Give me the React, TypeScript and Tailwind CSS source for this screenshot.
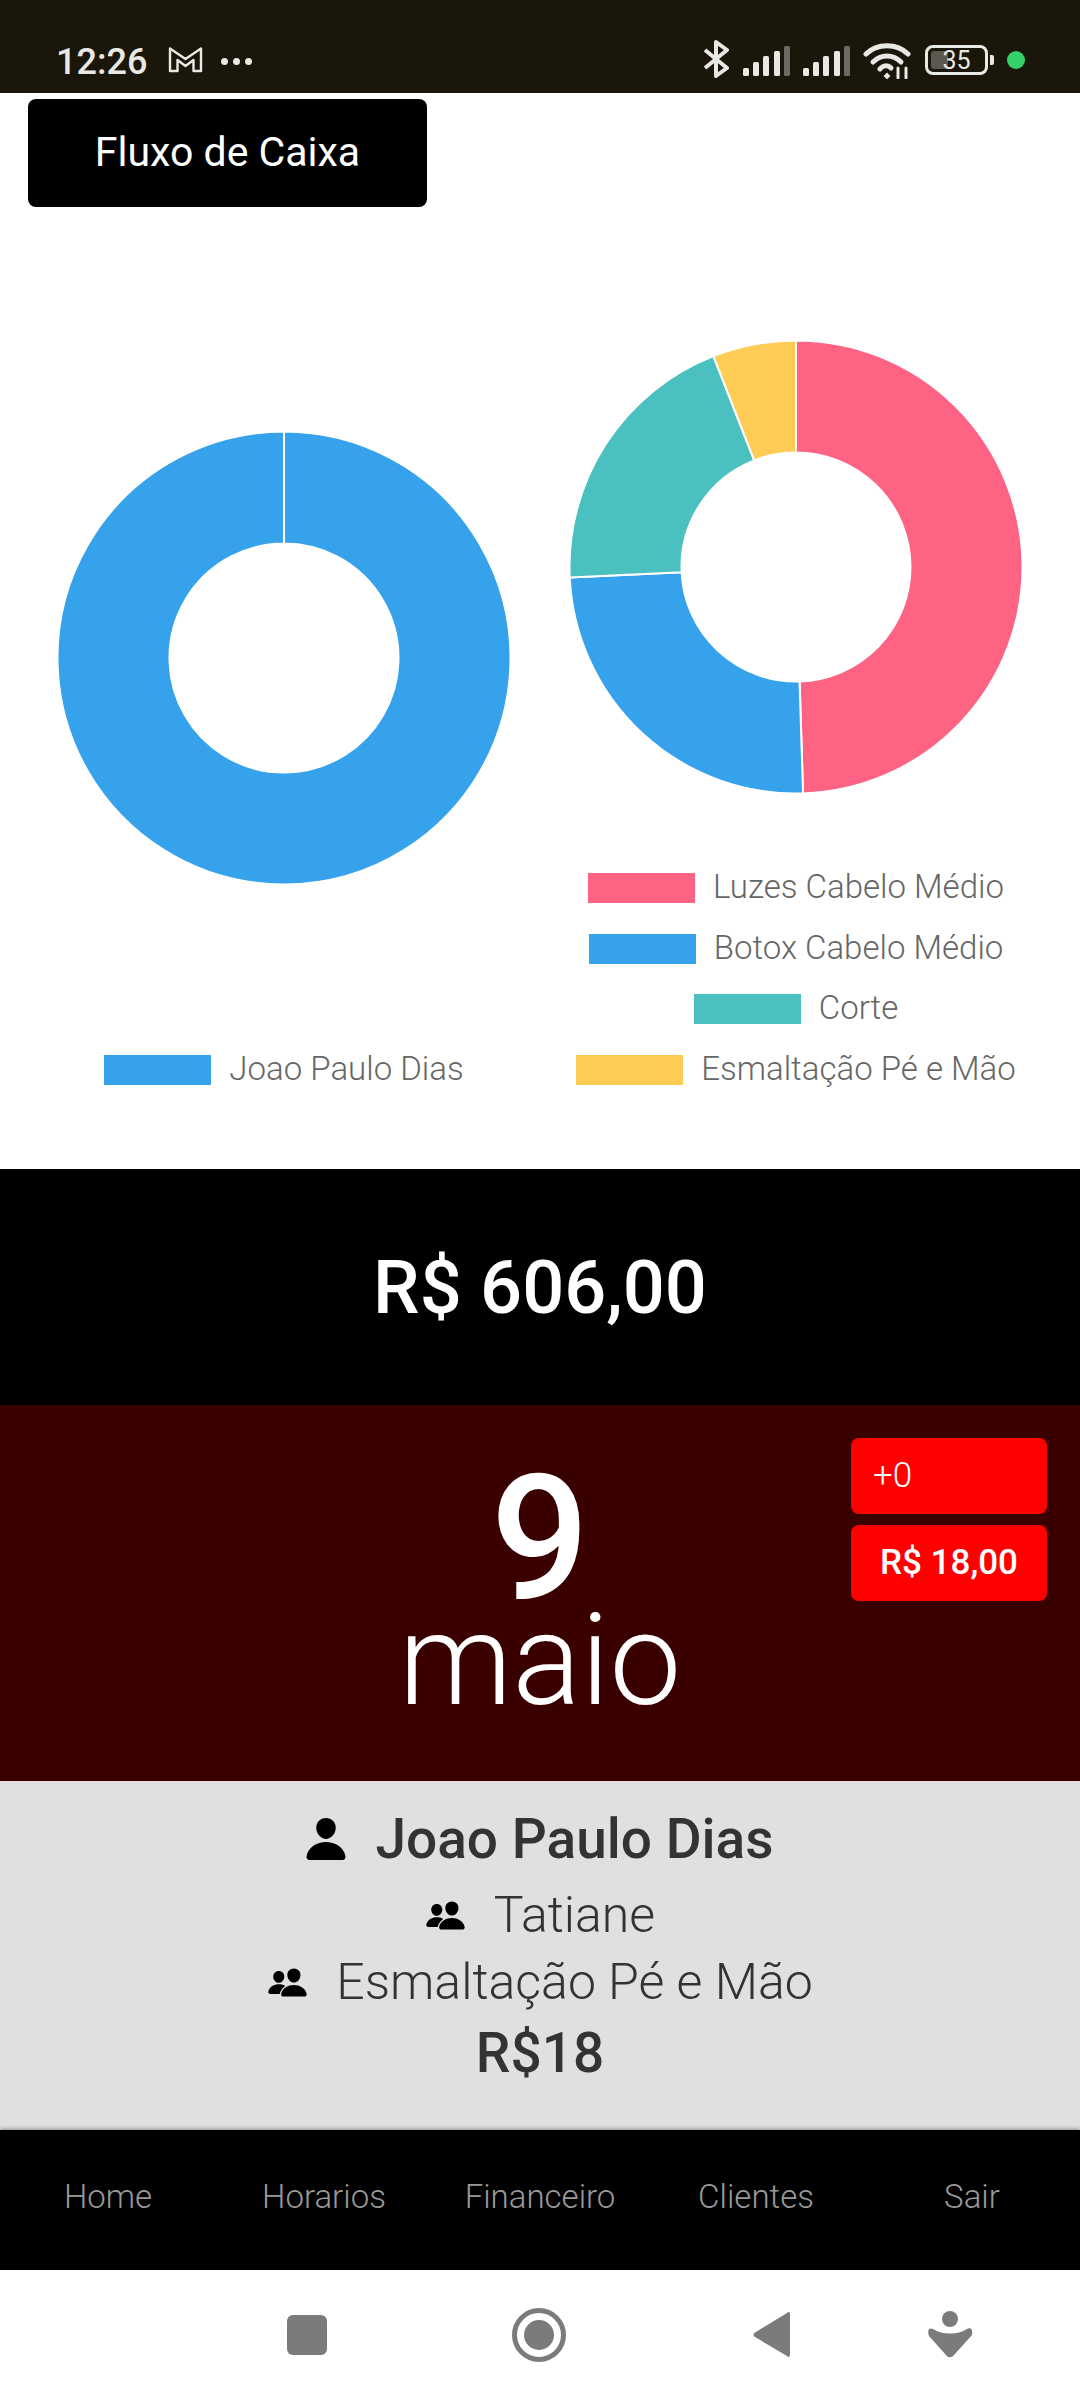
import { IoPeople, IoPerson } from "react-icons/io5";

type Slice = { label: string; value: number; color: string };

const servicos: Slice[] = [
  { label: "Luzes Cabelo Médio", value: 300, color: "#ff6384" },
  { label: "Botox Cabelo Médio", value: 150, color: "#36a2eb" },
  { label: "Corte", value: 120, color: "#4bc0c0" },
  { label: "Esmaltação Pé e Mão", value: 36, color: "#ffcd56" },
];

const profissionais: Slice[] = [
  { label: "Joao Paulo Dias", value: 606, color: "#36a2eb" },
];

const menu = ["Home", "Horarios", "Financeiro", "Clientes", "Sair"];

const point = (r: number, angle: number) => {
  const rad = (angle - 90) * (Math.PI / 180);
  return `${227 + r * Math.cos(rad)} ${227 + r * Math.sin(rad)}`;
};

const slicePath = (start: number, end: number) => {
  // fatia inteira: fecha em 359.99 para o arco nao sumir
  const stop = end - start >= 360 ? start + 359.99 : end;
  const large = stop - start > 180 ? 1 : 0;
  return [
    `M ${point(226.5, start)}`,
    `A 226.5 226.5 0 ${large} 1 ${point(226.5, stop)}`,
    `L ${point(114.5, stop)}`,
    `A 114.5 114.5 0 ${large} 0 ${point(114.5, start)}`,
    "Z",
  ].join(" ");
};

const Donut = ({ data }: { data: Slice[] }) => {
  const total = data.reduce((sum, s) => sum + s.value, 0);
  let angle = 0;
  return (
    <svg width="454" height="454" viewBox="0 0 454 454" className="block shrink-0">
      {data.map((s) => {
        const start = angle;
        angle += (s.value / total) * 360;
        return (
          <path key={s.label} d={slicePath(start, angle)} fill={s.color} stroke="#fff" strokeWidth="2" />
        );
      })}
    </svg>
  );
};

const LegendRow = ({ item }: { item: Slice }) => (
  <div className="flex items-center h-[30px] gap-[18px]">
    <span className="w-[107px] h-[30px]" style={{ backgroundColor: item.color }} />
    <span className="text-[33px] leading-[28px] pb-[2px] font-light text-[#666] whitespace-nowrap">{item.label}</span>
  </div>
);

const SignalIcon = () => (
  <svg width="48" height="30" viewBox="0 0 48 30">
    <rect x="0" y="22" width="6" height="8" rx="1.5" fill="#e8e8e4" />
    <rect x="10" y="16" width="6" height="14" rx="1.5" fill="#e8e8e4" />
    <rect x="20" y="10" width="6" height="20" rx="1.5" fill="#e8e8e4" />
    <rect x="31" y="5" width="6" height="25" rx="1.5" fill="#e8e8e4" />
    <rect x="41" y="0" width="6" height="30" rx="1.5" fill="#6b6a63" />
  </svg>
);

const StatusBar = () => (
  <div className="h-[93px] bg-[#1a160a] flex items-start pt-[41px] pl-[56px] text-[#e8e8e4]">
    <span className="w-[92px] mt-px text-[36px] leading-[40px] font-medium whitespace-nowrap">12:26</span>
    <svg width="35" height="27" viewBox="0 0 35 27" className="ml-[20px] mt-[5px]" fill="none" stroke="#e8e8e4" strokeWidth="2.4" strokeLinejoin="round">
      <path d="M2 2.5 L17.5 13 L33 2.5 V25 H25.5 V14 L17.5 20 L9.5 14 V25 H2 Z" />
    </svg>
    <div className="ml-[18px] mt-[17px] flex gap-[5px]">
      <span className="w-[7px] h-[7px] rounded-full bg-[#e8e8e4]" />
      <span className="w-[7px] h-[7px] rounded-full bg-[#e8e8e4]" />
      <span className="w-[7px] h-[7px] rounded-full bg-[#e8e8e4]" />
    </div>
    <svg width="26" height="38" viewBox="0 0 26 38" className="ml-[451px] -mt-px" fill="none" stroke="#e8e8e4" strokeWidth="4" strokeLinejoin="round">
      <path d="M2 10 L24 28 L13 36 V2 L24 10 L2 28" />
    </svg>
    <div className="ml-[14px] mt-[5px] flex gap-[12px]">
      <SignalIcon />
      <SignalIcon />
    </div>
    <svg width="48" height="36" viewBox="0 0 48 36" className="ml-[12px] mt-[2px]" fill="none" stroke="#e8e8e4" strokeWidth="5" strokeLinecap="round">
      <path d="M3 11 C14 0 34 0 45 11" />
      <path d="M10 19 C18 11 30 11 38 19" />
      <path d="M17 26 C20 22 25 22 28 25" />
      <path d="M22 33 L24 31 L26 33 L24 35 Z" fill="#e8e8e4" strokeWidth="2" />
      <path d="M35 25 V35 M43 25 V35" strokeWidth="3" />
    </svg>
    <div className="ml-[14px] mt-[4px] relative w-[63px] h-[30px] rounded-[8px] border-[3px] border-[#e8e8e4]">
      <span className="absolute left-[3px] top-[3px] w-[17px] h-[18px] rounded-[3px] bg-[#5a5850]" />
      <span className="absolute inset-0 flex items-center justify-center text-[25px] leading-none font-normal">35</span>
    </div>
    <span className="ml-[2px] mt-[14px] w-[4px] h-[10px] rounded-r-[2px] bg-[#e8e8e4]" />
    <span className="ml-[13px] mt-[10px] w-[18px] h-[18px] rounded-full bg-[#34d36a]" />
  </div>
);

const AndroidNav = () => (
  <div className="h-[130px] bg-white">
    <svg width="1080" height="130" viewBox="0 0 1080 130" className="block" fill="#7b7b7b">
      <rect x="287" y="45" width="40" height="40" rx="6" />
      <circle cx="539" cy="65" r="24.5" fill="none" stroke="#7b7b7b" strokeWidth="5" />
      <circle cx="539" cy="65" r="15" />
      <path d="M787 43 C789 41 790 42 790 45 V84 C790 87 789 88 787 86 L755 67 C753 65.500 753 64 755 62.500 Z" />
      <circle cx="950" cy="49" r="8" />
      <path d="M933 59 C938 62 943 63.500 950 63.500 C957 63.500 962 62 967 59 C971 57 973 60 972 65 L954 85 C952 88 948 88 946 85 L929 66 C927 60 929 57 933 59 Z" />
    </svg>
  </div>
);

const App = () => {
  return (
    <div className="w-[1080px] h-[2400px] overflow-hidden bg-white font-['Roboto',sans-serif]">
      <StatusBar />

      <div className="h-[1076px] bg-white pt-[6px]">
        <div className="ml-[28px] w-[399px] h-[108px] rounded-lg bg-black flex items-center justify-center text-white text-[41px]">
          Fluxo de Caixa
        </div>

        <div className="grid grid-cols-2 gap-2 px-8 mt-[133px] items-end">
          <div className="flex flex-col items-center">
            <Donut data={profissionais} />
            <div className="mt-[170px]">
              <LegendRow item={profissionais[0]} />
            </div>
          </div>
          <div className="flex flex-col items-center">
            <Donut data={servicos} />
            <div className="mt-[79px] flex flex-col items-center gap-[30.5px]">
              {servicos.map((s) => (
                <LegendRow key={s.label} item={s} />
              ))}
            </div>
          </div>
        </div>
      </div>

      <div className="h-[236px] bg-black flex items-center justify-center text-white text-[74px] font-medium">
        R$ 606,00
      </div>

      <div className="relative h-[376px] bg-[#3a0000] flex flex-col items-center text-white pt-[47px]">
        <div className="text-[174px] leading-[174px] font-medium">9</div>
        <div className="text-[128px] leading-[128px] font-light -mt-[30px]">maio</div>
        <div className="absolute left-[851px] top-[33px] w-[196px] flex flex-col gap-[11px]">
          <div className="h-[76px] rounded-lg bg-[#ff0000] flex items-center pl-[22px] text-[35px] font-light">+0</div>
          <div className="h-[76px] rounded-lg bg-[#ff0000] flex items-center justify-center text-[35px] font-medium">R$ 18,00</div>
        </div>
      </div>

      <div className="h-[349px] bg-[#e0e0e0] flex flex-col items-center text-[#333] pt-[17px]">
        <div className="h-[82px] flex items-center gap-[25px] pr-[4px] text-[55px] font-medium">
          <IoPerson className="text-black" size={48} />
          <span>Joao Paulo Dias</span>
        </div>
        <div className="h-[70px] flex items-center gap-[28px] text-[50px] font-light">
          <IoPeople className="text-black" size={41} />
          <span>Tatiane</span>
        </div>
        <div className="h-[64px] flex items-center gap-[28px] text-[50px] font-light">
          <IoPeople className="text-black" size={41} />
          <span>Esmaltação Pé e Mão</span>
        </div>
        <div className="h-[78px] flex items-center text-[55px] font-medium">R$18</div>
      </div>

      <div className="h-[140px] bg-black grid grid-cols-5 items-center pb-[6px] shadow-[0_-2px_3px_rgba(0,0,0,0.25)]">
        {menu.map((item) => (
          <div key={item} className="text-center text-[33px] font-light text-[#999]">
            {item}
          </div>
        ))}
      </div>

      <AndroidNav />
    </div>
  );
};

export default App;
